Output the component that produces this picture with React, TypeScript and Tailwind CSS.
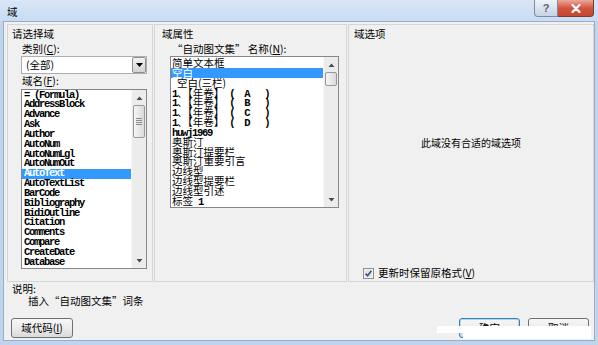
import React from "react";

const leftItems = [
  "= (Formula)",
  "AddressBlock",
  "Advance",
  "Ask",
  "Author",
  "AutoNum",
  "AutoNumLgl",
  "AutoNumOut",
  "AutoText",
  "AutoTextList",
  "BarCode",
  "Bibliography",
  "BidiOutline",
  "Citation",
  "Comments",
  "Compare",
  "CreateDate",
  "Database",
];

function M({ children }: { children: React.ReactNode }) {
  return (
    <span className="font-['Liberation_Mono',monospace] font-bold text-[10.5px] tracking-[-1.3px] whitespace-pre">
      {children}
    </span>
  );
}

function ArrowBox({ up }: { up?: boolean }) {
  return (
    <div className="h-[15px] shrink-0 flex items-center justify-center">
      <svg width="7" height="4" viewBox="0 0 7 4" className="block">
        <path d={up ? "M0.5 4L3.5 0.5L6.5 4Z" : "M0.5 0L3.5 3.5L6.5 0Z"} fill="#4a4a4a" />
      </svg>
    </div>
  );
}

function Row({ sel, children, extra }: { sel?: boolean; children: React.ReactNode; extra?: string }) {
  return (
    <div
      className={
        "h-[9.85px] leading-[9.85px] whitespace-nowrap " +
        (sel ? "bg-[#3399ff] text-white " : "text-black ") +
        (extra || "")
      }
    >
      {children}
    </div>
  );
}

function Button({ children, def, w }: { children: React.ReactNode; def?: boolean; w: string }) {
  return (
    <div
      className={
        "h-[20px] rounded-[3px] border flex items-center justify-center leading-[14px] bg-gradient-to-b from-[#f7f7f7] via-[#ececec] to-[#dadada] " +
        (def ? "border-[#3c7fb1] shadow-[inset_0_0_0_1px_#a8d8f5] " : "border-[#707070] ") +
        w
      }
    >
      {children}
    </div>
  );
}

export default function App() {
  return (
    <div className="relative w-[598px] h-[345px] overflow-hidden bg-[#bfd5ee] flex flex-col font-['Noto_Sans_CJK_SC','Liberation_Sans',sans-serif] text-[10.5px] text-black">
      {/* Title bar */}
      <div className="h-[21px] shrink-0 flex items-start bg-gradient-to-b from-[#d8e6f6] to-[#c9dcf2]">
        <div className="ml-[7px] mt-[5px] leading-[14px] text-[10.5px]">域</div>
        <div className="ml-auto mr-[4px] flex">
          <div className="w-[24px] h-[17px] border border-t-0 border-[#7b8ba3] rounded-bl-[4px] bg-gradient-to-b from-[#eef3f9] to-[#c6d3e4] flex items-center justify-center text-[#5a6678] text-[11px] font-bold leading-none font-['Liberation_Sans',sans-serif]">
            ?
          </div>
          <div className="w-[36px] h-[17px] border border-t-0 border-l-0 border-[#7c3a35] rounded-br-[4px] bg-gradient-to-b from-[#eaa99a] via-[#d2543e] to-[#c6472f] flex items-center justify-center">
            <svg width="10" height="9" viewBox="0 0 10 9" className="block">
              <path d="M1.5 1L8.5 8M8.5 1L1.5 8" stroke="white" strokeWidth="2.2" strokeLinecap="round" />
            </svg>
          </div>
        </div>
      </div>

      {/* Client area */}
      <div className="mx-[3px] h-[320px] bg-[#f0f0f0] border border-[#98adc6] flex flex-col">
        <div className="flex gap-[1px] pl-[3px] pt-[2px]">
          {/* Left group */}
          <div className="w-[146px] h-[258px] border border-[#d5d5d5] flex flex-col">
            <div className="pl-[4px] mt-[2px] leading-[14px]">请选择域</div>
            <div className="pl-[14px] mt-[1px] leading-[14px]">
              类别(<u>C</u>):
            </div>
            <div className="ml-[13px] w-[126px] h-[18px] bg-white border border-[#abadb3] flex items-center">
              <div className="flex-1 pl-[4px] leading-[14px]">(全部)</div>
              <div className="w-[14px] h-[16px] border border-[#8e8f8f] rounded-[2px] bg-gradient-to-b from-[#f2f2f2] to-[#d4d4d4] flex items-center justify-center">
                <svg width="7" height="4" viewBox="0 0 7 4" className="block">
                  <path d="M0 0L3.5 4L7 0Z" fill="#000" />
                </svg>
              </div>
            </div>
            <div className="pl-[14px] leading-[14px]">
              域名(<u>F</u>):
            </div>
            <div className="mt-[1px] ml-[13px] w-[126px] h-[180px] bg-white border border-[#828790] flex">
              <div className="flex-1 overflow-hidden pt-[0.5px] font-['Liberation_Mono',monospace] font-bold text-[10.5px] tracking-[-1.3px]">
                {leftItems.map((t) => (
                  <Row key={t} sel={t === "AutoText"} extra="pl-[2px] whitespace-pre">
                    {t}
                  </Row>
                ))}
              </div>
              <div className="w-[15px] h-full flex flex-col bg-[#ececec] border-l border-[#f8f8f8]">
                <ArrowBox up />
                <div className="mx-[1px] h-[33px] rounded-[2px] border border-[#989898] bg-gradient-to-r from-[#f6f6f6] to-[#dadada] flex flex-col items-center justify-center gap-[1px]">
                  <div className="w-[6px] h-[1px] bg-[#8c8c8c]" />
                  <div className="w-[6px] h-[1px] bg-[#8c8c8c]" />
                  <div className="w-[6px] h-[1px] bg-[#8c8c8c]" />
                  <div className="w-[6px] h-[1px] bg-[#8c8c8c]" />
                </div>
                <div className="flex-1" />
                <ArrowBox />
              </div>
            </div>
          </div>

          {/* Middle group */}
          <div className="w-[193px] h-[258px] border border-[#d5d5d5] flex flex-col">
            <div className="pl-[7px] mt-[2px] leading-[14px]">域属性</div>
            <div className="pl-[17px] mt-[1px] leading-[14px] whitespace-pre">
              “自动图文集” 名称(<u>N</u>):
            </div>
            <div className="ml-[15px] w-[169px] h-[152px] bg-white border border-[#828790] flex">
              <div className="flex-1 overflow-hidden pt-[1px] text-[10.5px]">
                <Row extra="pl-[1px]">简单文本框</Row>
                <Row sel extra="pl-[1px]">空白</Row>
                <Row extra="pl-[6px]">空白(三栏)</Row>
                {["A", "B", "C", "D"].map((l) => (
                  <Row key={l} extra="pl-[1px]">
                    <M>1</M>、【年卷】<M>{" (  " + l + "   )"}</M>
                  </Row>
                ))}
                <Row extra="pl-[1px]">
                  <M>huwj1969</M>
                </Row>
                <Row extra="pl-[1px]">奥斯汀</Row>
                <Row extra="pl-[1px]">奥斯汀提要栏</Row>
                <Row extra="pl-[1px]">奥斯汀重要引言</Row>
                <Row extra="pl-[1px]">边线型</Row>
                <Row extra="pl-[1px]">边线型提要栏</Row>
                <Row extra="pl-[1px]">边线型引述</Row>
                <Row extra="pl-[1px]">
                  标签<M> 1</M>
                </Row>
              </div>
              <div className="w-[15px] h-full flex flex-col bg-[#ececec] border-l border-[#f8f8f8]">
                <ArrowBox up />
                <div className="mx-[1px] h-[14px] rounded-[2px] border border-[#989898] bg-gradient-to-r from-[#f6f6f6] to-[#dadada]" />
                <div className="flex-1" />
                <ArrowBox />
              </div>
            </div>
          </div>

          {/* Right group */}
          <div className="flex-1 h-[258px] border border-[#d5d5d5] flex flex-col">
            <div className="pl-[5px] mt-[2px] leading-[14px]">域选项</div>
            <div className="mt-[95px] leading-[14px] text-center text-[10px]">此域没有合适的域选项</div>
            <div className="mt-[116px] pl-[14px] flex items-center gap-[4px] leading-[14px]">
              <svg width="11" height="11" viewBox="0 0 11 11" className="block">
                <rect x="0.5" y="0.5" width="10" height="10" fill="#f4f4f4" stroke="#8e8f8f" />
                <rect x="2" y="2" width="7" height="7" fill="#e2e6ea" />
                <path d="M2.6 5.6L4.6 7.8L8.4 2.8" stroke="#3b4f87" strokeWidth="1.6" fill="none" />
              </svg>
              <span>
                更新时保留原格式(<u>V</u>)
              </span>
            </div>
          </div>
        </div>

        <div className="pl-[8px] mt-[1px] leading-[12px]">说明:</div>
        <div className="pl-[24px] leading-[12px] whitespace-pre">插入“自动图文集”词条</div>

        <div className="mt-[11px] pl-[7px] pr-[5px] flex items-start">
          <Button w="w-[62px]">
            域代码(<u>I</u>)
          </Button>
          <div className="ml-auto flex gap-[8px]">
            <Button def w="w-[61px]">
              确定
            </Button>
            <Button w="w-[61px]">取消</Button>
          </div>
        </div>
      </div>

      {/* erased area overlay */}
      <div className="absolute left-[437px] top-[326px] w-[27px] h-[7px] bg-white" />
      <div className="absolute left-[463px] top-[326px] w-[128px] h-[13px] bg-white" />
    </div>
  );
}
